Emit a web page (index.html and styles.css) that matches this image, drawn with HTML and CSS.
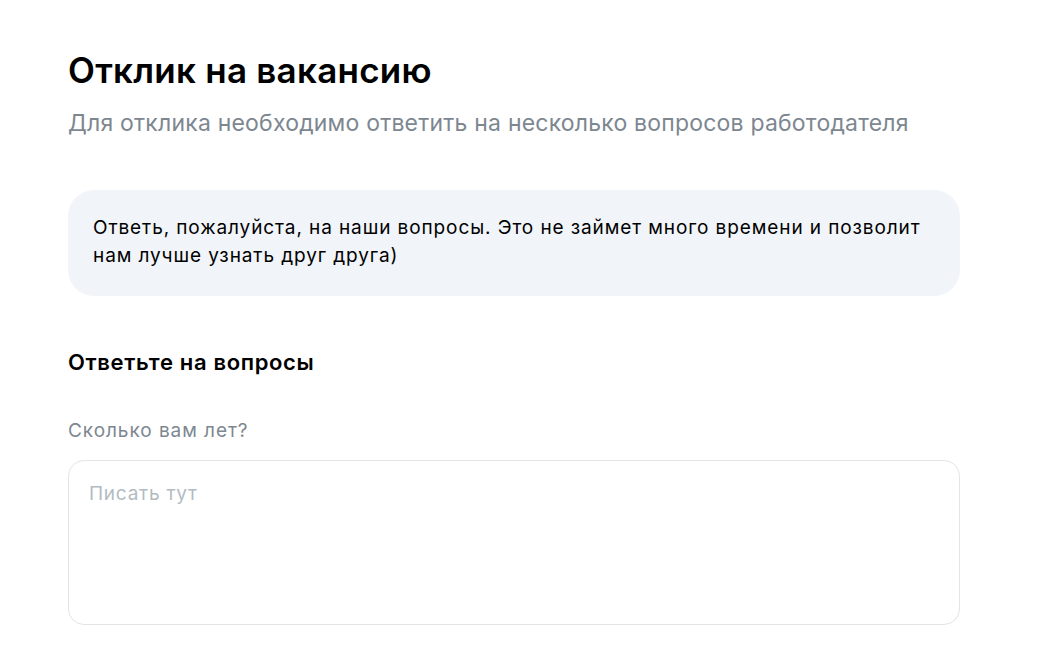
FILE: index.html
```html
<!DOCTYPE html>
<html lang="ru">
<head>
    <meta charset="UTF-8">
    <meta name="viewport" content="width=device-width, initial-scale=1.0">
    <title>Отклик на вакансию</title>
    <link rel="stylesheet" href="styles.css">
</head>
<body>
    <div class="container">
        <header>
            <h1>Отклик на вакансию</h1>
            <p class="subtitle">Для отклика необходимо ответить на несколько вопросов работодателя</p>
        </header>

        <div class="note">
            Ответь, пожалуйста, на наши вопросы. Это не займет много времени и позволит нам лучше узнать друг друга)
        </div>

        <section class="questions">
            <h2>Ответьте на вопросы</h2>
            <label class="field">
                <span class="field-label">Сколько вам лет?</span>
                <textarea placeholder="Писать тут"></textarea>
            </label>
        </section>
    </div>
</body>
</html>
```

FILE: styles.css
```css
* { box-sizing: border-box; margin: 0; padding: 0; font-family: 'Inter', 'Liberation Sans', sans-serif; }
body { background: #fff; color: #000; padding: 48px 68px 0; }
.container { width: 892px; }

header { margin-bottom: 52px; }
h1 { font-size: 35px; font-weight: 600; line-height: 44px; letter-spacing: 0.25px; }
.subtitle { font-size: 23px; color: #7d8790; line-height: 30px; margin-top: 16px; letter-spacing: 0.2px; }

.note { background: #f1f4f8; border-radius: 26px; padding: 24px 25px 26px; font-size: 19px; line-height: 28px; letter-spacing: 0.9px; }

.questions { margin-top: 50px; }
h2 { font-size: 22px; font-weight: 600; line-height: 32px; letter-spacing: 0.65px; }

.field { display: flex; flex-direction: column; margin-top: 40px; }
.field-label { font-size: 19px; line-height: 26px; color: #7d8790; margin-bottom: 16px; letter-spacing: 0.95px; }
textarea { height: 165px; border: 1px solid #e2e4e6; border-radius: 16px; padding: 20px; font-family: inherit; font-size: 19px; line-height: 26px; letter-spacing: 0.75px; resize: none; outline: none; }
textarea::placeholder { color: #b3bbc2; }
```
